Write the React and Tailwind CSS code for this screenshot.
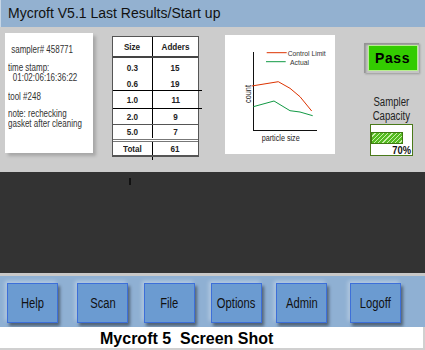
import React from 'react';

const buttons = [
  { label: 'Help', cls: 'ml-[7px]' },
  { label: 'Scan', cls: 'ml-[19px]' },
  { label: 'File', cls: 'ml-[16px]' },
  { label: 'Options', cls: 'ml-[16px]' },
  { label: 'Admin', cls: 'ml-[14px]' },
  { label: 'Logoff', cls: 'ml-[23px]' },
];

const rows = [
  { size: '0.3', adders: '15', cls: 'h-[19px] items-center' },
  { size: '0.6', adders: '19', cls: 'h-[14px] items-end border-b border-black w-[calc(100%+4px)]' },
  { size: '1.0', adders: '11', cls: 'h-[18px] items-center border-b border-black w-[calc(100%+4px)]' },
  { size: '2.0', adders: '9', cls: 'h-[16px] items-center border-b border-[#555]' },
  { size: '5.0', adders: '7', cls: 'h-[17px] items-end pb-[1px] border-b-[3px] border-double border-[#777]' },
  { size: 'Total', adders: '61', cls: 'h-[14px] items-center border-b border-[#555]' },
];

function InfoCard() {
  return (
    <div className="mt-[6px] ml-[5px] flex h-[120px] w-[88px] bg-white shadow-[3px_3px_3px_rgba(0,0,0,0.18)]">
      <div className="flex-1 pl-[3px] pt-[12px] text-[10px] leading-[10px] text-[#333]">
        <div className="origin-left scale-x-[0.8] whitespace-nowrap">
          <div className="ml-[4px]">sampler# 458771</div>
          <div className="mt-[8px]">time stamp:</div>
          <div className="ml-[6px]">01:02:06:16:36:22</div>
          <div className="mt-[9px]">tool #248</div>
          <div className="mt-[7px]">note: rechecking</div>
          <div>gasket after cleaning</div>
        </div>
      </div>
      <div className="w-[6px] bg-[#e6e6e6]" />
    </div>
  );
}

function AddersTable() {
  return (
    <div className="ml-[19px] mt-[9px] flex flex-col">
      <div className="w-[87px] border border-[#555] bg-white text-[9px] font-bold leading-[10px] text-[#222]">
        <div className="grid h-[21px] grid-cols-[40px_45px] items-center border-b-2 border-[#444]">
          <div className="flex h-full items-center justify-center border-r border-black"><span className="scale-x-[0.9]">Size</span></div>
          <div className="text-center"><span className="inline-block scale-x-[0.9]">Adders</span></div>
        </div>
        {rows.map((r) => (
          <div key={r.size} className={`grid grid-cols-[40px_45px] ${r.cls}`}>
            <div className="flex h-full items-inherit justify-center border-r border-black">
              <span className="self-center scale-x-[0.9]">{r.size}</span>
            </div>
            <div className="flex h-full justify-center">
              <span className="self-center scale-x-[0.9]">{r.adders}</span>
            </div>
          </div>
        ))}
      </div>
      <div className="ml-[40px] h-[3px] w-px bg-black" />
    </div>
  );
}

function Chart() {
  return (
    <div className="ml-[26px] mt-[8px] h-[119px] w-[110px] bg-white">
      <svg width="110" height="119" viewBox="0 0 110 119" fontFamily="'Liberation Sans', Arial, sans-serif">
        <line x1="28.5" y1="17" x2="28.5" y2="95.5" stroke="#111" strokeWidth="1" />
        <line x1="28" y1="95.5" x2="92" y2="95.5" stroke="#111" strokeWidth="1" />
        <polyline points="26.7,51 53.3,46.7 65,53.3 75,61.7 86.7,76" fill="none" stroke="#dd3300" strokeWidth="1" />
        <polyline points="28.3,71.7 49,66 65,75.7 75,77 87.7,80.7" fill="none" stroke="#119944" strokeWidth="1" />
        <line x1="41.7" y1="17.7" x2="61.7" y2="17.7" stroke="#dd3300" strokeWidth="1" />
        <line x1="41" y1="26.7" x2="60.7" y2="26.7" stroke="#119944" strokeWidth="1" />
        <text x="62.7" y="20.5" fontSize="8" fill="#333" textLength="38" lengthAdjust="spacingAndGlyphs">Control Limit</text>
        <text x="65" y="29.5" fontSize="8" fill="#333" textLength="19" lengthAdjust="spacingAndGlyphs">Actual</text>
        <text x="0" y="0" fontSize="8.5" fill="#222" textLength="18" lengthAdjust="spacingAndGlyphs" transform="translate(25.5 68) rotate(-90)">count</text>
        <text x="36.7" y="106.3" fontSize="8.5" fill="#222" textLength="38" lengthAdjust="spacingAndGlyphs">particle size</text>
      </svg>
    </div>
  );
}

function StatusColumn() {
  return (
    <div className="ml-[28px] mt-[16px] flex w-[56px] flex-col items-center">
      <div className="flex h-[30px] w-[55px] items-center justify-end bg-[#c4c4c4] pr-[1px] shadow-[inset_2px_2px_2px_rgba(0,0,0,0.25),1px_1px_2px_rgba(0,0,0,0.25)]">
        <div className="flex h-[26px] w-[50px] items-center justify-center border border-[#b8f090] bg-[#33cc00] text-[14px] font-bold tracking-[0.6px] text-black">
          Pass
        </div>
      </div>
      <div className="mt-[22px] text-center text-[12px] leading-[14px] text-[#222]">
        <div className="scale-x-[0.8]">Sampler</div>
        <div className="scale-x-[0.8]">Capacity</div>
      </div>
      <div className="ml-[1px] mt-[1px] flex h-[32px] w-[43px] flex-col self-start border border-[#4a7a1a] bg-white ml-[7px]">
        <div className="mt-[7px] h-[12px] w-[32px] border border-[#3f7a12] bg-[repeating-linear-gradient(135deg,#55bb22_0px,#55bb22_2px,#c8f0a8_2px,#c8f0a8_3px)]" />
        <div className="mt-[1px] pr-[1px] text-right text-[11px] font-bold leading-[10px] text-[#111]">
          <span className="inline-block origin-right scale-x-[0.85]">70%</span>
        </div>
      </div>
    </div>
  );
}

export default function App() {
  return (
    <div className="flex h-[350px] w-[425px] flex-col overflow-hidden bg-white font-['Liberation_Sans',Arial,sans-serif]">
      <div className="flex h-[27px] items-center border-l border-[#c6d6e6] bg-[#93b1d0] pl-[7px] text-[14px] text-[#111]">
        Mycroft V5.1 Last Results/Start up
      </div>

      <div className="flex h-[145px] items-start bg-[#cccccc]">
        <InfoCard />
        <AddersTable />
        <Chart />
        <StatusColumn />
      </div>

      <div className="h-[101px] bg-[#333333] pt-[6px]">
        <div className="ml-[129px] h-[7px] w-[2px] bg-[#111]" />
      </div>

      <div className="h-[3px] bg-[#c8c8c8]" />

      <div className="flex h-[51px] items-start bg-[#8fb0d3] pt-[7px]">
        {buttons.map((b) => (
          <div
            key={b.label}
            className={`${b.cls} flex h-[40px] w-[51px] items-center justify-center border border-[#3d6fd9] bg-[#6b9bd1] text-[14px] text-[#111] shadow-[2px_3px_3px_rgba(0,0,0,0.45),-2px_-2px_4px_rgba(255,255,255,0.35)]`}
          >
            <span className="inline-block scale-x-[0.8] whitespace-nowrap">{b.label}</span>
          </div>
        ))}
      </div>

      <div className="flex h-[23px] items-start border-r-2 border-b-2 border-[#d0d0d0] bg-white pl-[100px] pt-[3px]">
        <span className="whitespace-pre text-[16px] font-bold leading-[17px] text-black">{'Mycroft 5  Screen Shot'}</span>
      </div>
    </div>
  );
}
